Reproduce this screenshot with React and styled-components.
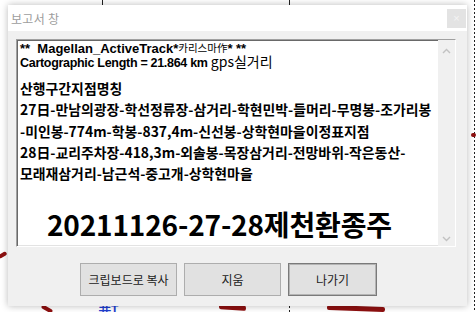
import React from 'react';
import styled, { createGlobalStyle } from 'styled-components';

const GlobalStyle = createGlobalStyle`
  html, body {
    margin: 0;
    padding: 0;
    background: #ffffff;
  }
  * {
    box-sizing: border-box;
  }
`;

const KR = `"Malgun Gothic", "Noto Sans CJK KR", "Noto Sans", sans-serif`;

const Page = styled.div`
  position: relative;
  width: 476px;
  height: 312px;
  overflow: hidden;
  background: #ffffff;
  padding: 5px 9px 0 8px;
`;

// map canvas behind the dialog
const MapLayer = styled.svg`
  position: absolute;
  left: 0;
  top: 0;
`;

const MapLabel = styled.span`
  position: absolute;
  left: 99px;
  top: 302px;
  font-family: "Liberation Sans", sans-serif;
  font-size: 12px;
  font-weight: bold;
  color: #1f3fd0;
`;

// red track fragments peeking out from under the dialog
const Track = styled.span`
  position: absolute;
  left: ${(p) => p.$x}px;
  top: ${(p) => p.$y}px;
  width: ${(p) => p.$w}px;
  height: ${(p) => p.$h}px;
  background: #8e1010;
  border-radius: 2px;
  transform: rotate(${(p) => p.$r || 0}deg);
`;

const Dialog = styled.div`
  position: relative;
  width: 459px;
  height: 301px;
  display: flex;
  flex-direction: column;
  background: #f0f0f0;
  box-shadow: 0 0 7px rgba(0, 0, 0, 0.28);
`;

const TitleBar = styled.div`
  height: 26px;
  display: flex;
  align-items: center;
  justify-content: space-between;
  padding: 0 1px 0 3px;
  background: #ffffff;
`;

const Title = styled.span`
  font-family: ${KR};
  font-size: 12px;
  letter-spacing: 0.3px;
  color: #9d9d9d;
`;

const CloseBox = styled.div`
  width: 19px;
  height: 19px;
  display: flex;
  align-items: center;
  justify-content: center;
  background: #e3e3e3;
  color: #f4f4f4;
  font-family: "Liberation Sans", sans-serif;
  font-size: 11px;
`;

const Body = styled.div`
  flex: 1;
  display: flex;
  flex-direction: column;
  padding: 8px 11px 10px 8px;
`;

const TextBox = styled.div`
  height: 208px;
  display: flex;
  background: #ffffff;
  border: 1px solid;
  border-color: #a0a0a0 #ffffff #ffffff #a0a0a0;
  box-shadow: inset 1px 1px 0 #696969, inset -1px -1px 0 #e3e3e3;
`;

const Content = styled.div`
  flex: 1;
  padding: 2px 0 0 3px;
  color: #000;
`;

const Head = styled.div`
  font-family: "Liberation Sans", Arial, sans-serif;
  font-size: ${(p) => p.$size}px;
  letter-spacing: ${(p) => p.$track || 0}px;
  font-weight: bold;
  line-height: 13px;
  height: 13px;
  white-space: pre;
`;

const Small = styled.span`
  font-family: ${KR};
  font-size: 10.5px;
  font-weight: normal;
  line-height: 10px;
  vertical-align: 1px;
`;

const Plain = styled.span`
  font-family: ${KR};
  font-size: 14px;
  font-weight: normal;
  letter-spacing: 0;
  line-height: 13px;
`;

const Line = styled.div`
  font-family: ${KR};
  font-size: 13.9px;
  font-weight: 700;
  line-height: 21.3px;
  white-space: nowrap;
  margin-top: ${(p) => p.$gap || 0}px;
`;

const Big = styled.div`
  font-family: ${KR};
  font-size: 28px;
  font-weight: 700;
  line-height: 32px;
  margin: 24px 0 0 27px;
  letter-spacing: -0.15px;
  white-space: nowrap;
`;

const ScrollBar = styled.div`
  width: 17px;
  display: flex;
  flex-direction: column;
  justify-content: space-between;
  align-items: center;
  padding: 8px 0 4px;
  background: #f0f0f0;
`;

const ButtonRow = styled.div`
  display: flex;
  gap: 7px;
  margin-top: 16px;
  padding-left: 64px;
`;

const Button = styled.button`
  width: ${(p) => p.$w}px;
  height: 33px;
  padding: 0;
  background: #e1e1e1;
  border: 1px solid ${(p) => (p.$default ? '#7a7a7a' : '#adadad')};
  box-shadow: ${(p) => (p.$default ? 'inset 0 0 0 1px #b4b4b4' : 'none')};
  font-family: ${KR};
  font-size: 12px;
  color: #1a1a1a;
`;

const Chevron = ({ up }) => (
  <svg width="9" height="6" viewBox="0 0 9 6">
    <path
      d={up ? 'M1 5 L4.5 1.5 L8 5' : 'M1 1 L4.5 4.5 L8 1'}
      fill="none"
      stroke="#c2c2c2"
      strokeWidth="1.4"
    />
  </svg>
);

const tracks = [
  { x: -2, y: 253, w: 9, h: 4, r: -30 },
  { x: 41, y: 307, w: 12, h: 4, r: 30 },
  { x: 219, y: 305, w: 27, h: 5, r: 4 },
  { x: 327, y: 306, w: 58, h: 5, r: 2 },
  { x: 471, y: 133, w: 5, h: 4, r: 0 },
];

const Backdrop = () => (
  <>
    <MapLayer width="476" height="312">
      <line x1="474.5" y1="0" x2="474.5" y2="312" stroke="#222" strokeWidth="1" strokeDasharray="2 2" />
      <line x1="102.5" y1="0" x2="102.5" y2="6" stroke="#222" strokeWidth="1" />
      <line x1="289.5" y1="0" x2="289.5" y2="6" stroke="#222" strokeWidth="1" />
      <line x1="289.5" y1="306" x2="289.5" y2="312" stroke="#222" strokeWidth="1" strokeDasharray="2 2" />
    </MapLayer>
    {tracks.map((t, i) => (
      <Track key={i} $x={t.x} $y={t.y} $w={t.w} $h={t.h} $r={t.r} />
    ))}
    <MapLabel>井T</MapLabel>
  </>
);

export default function App() {
  return (
    <>
      <GlobalStyle />
      <Page>
        <Backdrop />
        <Dialog>
          <TitleBar>
            <Title>보고서 창</Title>
            <CloseBox>×</CloseBox>
          </TitleBar>
          <Body>
            <TextBox>
              <Content>
                <Head $size={13}>
                  {'**  Magellan_ActiveTrack*'}
                  <Small>카리스마作</Small>
                  {'* **'}
                </Head>
                <Head $size={12.5} $track={-0.3}>
                  Cartographic Length = 21.864 km <Plain>gps실거리</Plain>
                </Head>
                <Line $gap={10}>산행구간지점명칭</Line>
                <Line>27日-만남의광장-학선정류장-삼거리-학현민박-들머리-무명봉-조가리봉</Line>
                <Line>-미인봉-774m-학봉-837,4m-신선봉-상학현마을이정표지점</Line>
                <Line>28日-교리주차장-418,3m-외솔봉-목장삼거리-전망바위-작은동산-</Line>
                <Line>모래재삼거리-남근석-중고개-상학현마을</Line>
                <Big>20211126-27-28제천환종주</Big>
              </Content>
              <ScrollBar>
                <Chevron up />
                <Chevron />
              </ScrollBar>
            </TextBox>
            <ButtonRow>
              <Button $w={97}>크립보드로 복사</Button>
              <Button $w={97}>지움</Button>
              <Button $w={89} $default>나가기</Button>
            </ButtonRow>
          </Body>
        </Dialog>
      </Page>
    </>
  );
}
